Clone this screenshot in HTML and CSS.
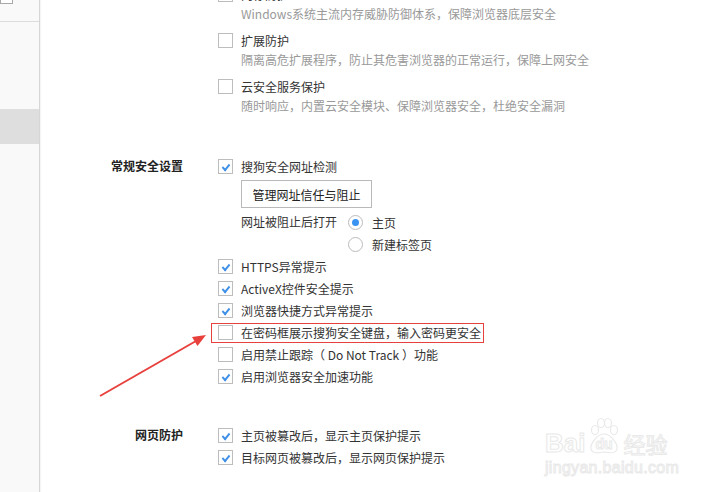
FILE: index.html
```html
<!DOCTYPE html>
<html lang="zh-CN">
<head>
    <meta charset="UTF-8">
    <meta name="viewport" content="width=device-width, initial-scale=1.0">
    <title>安全设置</title>
    <link rel="stylesheet" href="styles.css">
</head>
<body>
    <div class="page">
        <aside class="sidebar">
            <div class="sidebar-input"></div>
            <div class="sidebar-line"></div>
            <div class="sidebar-active"></div>
        </aside>

        <main class="content">
            <section class="group group-top">
                <div class="group-label"></div>
                <div class="group-body">
                    <div class="opt">
                        <div class="opt-row"><span class="cb"></span><span>内存防护</span></div>
                        <div class="opt-desc">Windows系统主流内存威胁防御体系，保障浏览器底层安全</div>
                    </div>
                    <div class="opt">
                        <div class="opt-row"><span class="cb"></span><span>扩展防护</span></div>
                        <div class="opt-desc">隔离高危扩展程序，防止其危害浏览器的正常运行，保障上网安全</div>
                    </div>
                    <div class="opt">
                        <div class="opt-row"><span class="cb"></span><span>云安全服务保护</span></div>
                        <div class="opt-desc">随时响应，内置云安全模块、保障浏览器安全，杜绝安全漏洞</div>
                    </div>
                </div>
            </section>

            <section class="group group-general">
                <div class="group-label">常规安全设置</div>
                <div class="group-body">
                    <div class="row"><span class="cb checked"></span><span>搜狗安全网址检测</span></div>
                    <button class="btn">管理网址信任与阻止</button>
                    <div class="radio-group">
                        <span class="radio-title">网址被阻止后打开</span>
                        <div class="radio-list">
                            <div class="row"><span class="radio checked"></span><span>主页</span></div>
                            <div class="row"><span class="radio"></span><span>新建标签页</span></div>
                        </div>
                    </div>
                    <div class="row"><span class="cb checked"></span><span>HTTPS异常提示</span></div>
                    <div class="row"><span class="cb checked"></span><span>ActiveX控件安全提示</span></div>
                    <div class="row"><span class="cb checked"></span><span>浏览器快捷方式异常提示</span></div>
                    <div class="row"><span class="cb"></span><span>在密码框展示搜狗安全键盘，输入密码更安全</span></div>
                    <div class="row"><span class="cb"></span><span>启用禁止跟踪（ Do Not Track ）功能</span></div>
                    <div class="row"><span class="cb checked"></span><span>启用浏览器安全加速功能</span></div>
                </div>
            </section>

            <section class="group group-web">
                <div class="group-label">网页防护</div>
                <div class="group-body">
                    <div class="row"><span class="cb checked"></span><span>主页被篡改后，显示主页保护提示</span></div>
                    <div class="row"><span class="cb checked"></span><span>目标网页被篡改后，显示网页保护提示</span></div>
                </div>
            </section>
        </main>

        <!-- 标注：红框和箭头 -->
        <svg class="annot" width="711" height="492" viewBox="0 0 711 492">
            <rect x="211.5" y="323.5" width="272" height="19" fill="none" stroke="#e8413d" stroke-width="1"/>
            <line x1="100" y1="396" x2="196" y2="341" stroke="#e8413d" stroke-width="2"/>
            <polygon points="206,335 197.5,346 192,337" fill="#e8413d"/>
        </svg>

        <div class="watermark">
            <div class="wm-top">
                <span class="wm-bai">Bai</span>
                <span class="wm-du">
                    <svg width="34" height="40" viewBox="0 0 34 40">
                        <g fill="none" stroke="#e9e9e9" stroke-width="1.2">
                            <ellipse cx="8" cy="14" rx="3.5" ry="4.5"/>
                            <ellipse cx="14" cy="7" rx="3.5" ry="4.5"/>
                            <ellipse cx="21" cy="7" rx="3.5" ry="4.5"/>
                            <ellipse cx="27" cy="14" rx="3.5" ry="4.5"/>
                            <path d="M17 18 C10 18 3 28 4 33 C5 38 12 37 17 36 C22 37 29 38 30 33 C31 28 24 18 17 18 Z"/>
                        </g>
                    </svg>
                    <span class="wm-du-text">du</span>
                </span>
                <span class="wm-jy">经验</span>
            </div>
            <div class="wm-url">jingyan.baidu.com</div>
        </div>
    </div>
</body>
</html>
```

FILE: styles.css
```css
body {
    margin: 0;
    padding: 0;
    font-family: "Noto Sans CJK SC", "Microsoft YaHei", sans-serif;
    font-size: 12px;
    color: #333;
    background-color: #fff;
    overflow: hidden;
}
.page {
    position: relative;
    display: flex;
    width: 711px;
    height: 492px;
    overflow: hidden;
}
.sidebar {
    width: 39px;
    flex-shrink: 0;
    background-color: #f9f9f9;
    border-right: 1px solid #d6d6d6;
    box-shadow: 1px 0 1px rgba(0,0,0,0.04);
}
.sidebar-input {
    width: 11px;
    height: 3px;
    margin-top: -1px;
    border: 1px solid #a8a8a8;
    background-color: #fff;
}
.sidebar-line {
    margin-top: 17px;
    border-bottom: 1px solid #dcdcdc;
}
.sidebar-active {
    margin-top: 87px;
    height: 35px;
    background-color: #dedede;
}
.content {
    flex: 1;
    margin-top: -15px;
}
.group {
    display: grid;
    grid-template-columns: 143px 1fr;
    column-gap: 35px;
}
.group-label {
    text-align: right;
    font-weight: bold;
    line-height: 22px;
    color: #222;
}
.group-general {
    margin-top: 32px;
}
.group-web {
    margin-top: 37px;
}
.opt {
    margin-bottom: 8px;
}
.opt-row {
    display: flex;
    align-items: center;
    gap: 8px;
    height: 19px;
}
.opt-desc {
    padding-left: 23px;
    line-height: 19px;
    color: #999;
}
.row {
    display: flex;
    align-items: center;
    gap: 8px;
    height: 22px;
    white-space: nowrap;
}
.cb {
    position: relative;
    width: 13px;
    height: 13px;
    flex-shrink: 0;
    border: 1px solid #bdbdbd;
    background-color: #fff;
}
.cb.checked::after {
    content: "";
    position: absolute;
    left: 3px;
    top: 1px;
    width: 6px;
    height: 3px;
    border-left: 2px solid #3d8fe8;
    border-bottom: 2px solid #3d8fe8;
    transform: translate(0, 3px) rotate(-50deg) skewX(-8deg);
}
.btn {
    display: block;
    box-sizing: border-box;
    margin: 3px 0 3px 23px;
    width: 131px;
    height: 28px;
    padding: 0;
    border: 1px solid #b9b9b9;
    background-color: #fff;
    font-family: inherit;
    font-size: 12px;
    color: #222;
}
.radio-group {
    display: flex;
    padding-left: 23px;
}
.radio-title {
    line-height: 22px;
    margin-right: 11px;
}
.radio-list .row {
    gap: 9px;
}
.radio {
    position: relative;
    width: 13px;
    height: 13px;
    flex-shrink: 0;
    border: 1px solid #bbb;
    border-radius: 50%;
    background-color: #fff;
}
.radio.checked::after {
    content: "";
    position: absolute;
    left: 3px;
    top: 3px;
    width: 7px;
    height: 7px;
    border-radius: 50%;
    background-color: #3b93f1;
}
.annot {
    position: absolute;
    left: 0;
    top: 0;
    pointer-events: none;
}
.watermark {
    position: absolute;
    left: 545px;
    top: 412px;
    font-family: "Liberation Sans", Arial, sans-serif;
    color: transparent;
    -webkit-text-stroke: 1px #e9e9e9;
    pointer-events: none;
}
.wm-top {
    display: flex;
    align-items: flex-end;
    height: 44px;
}
.wm-bai {
    font-size: 26px;
    font-weight: bold;
    line-height: 26px;
}
.wm-du {
    position: relative;
    width: 34px;
    height: 40px;
    margin: 0 2px;
}
.wm-du svg {
    position: absolute;
    left: 0;
    top: 0;
}
.wm-du-text {
    position: absolute;
    left: 8px;
    top: 20px;
    font-size: 14px;
    font-weight: bold;
}
.wm-jy {
    font-family: "Noto Sans CJK SC", sans-serif;
    font-size: 22px;
    line-height: 26px;
}
.wm-url {
    margin-top: 3px;
    font-size: 16px;
    letter-spacing: 0.3px;
}
```
